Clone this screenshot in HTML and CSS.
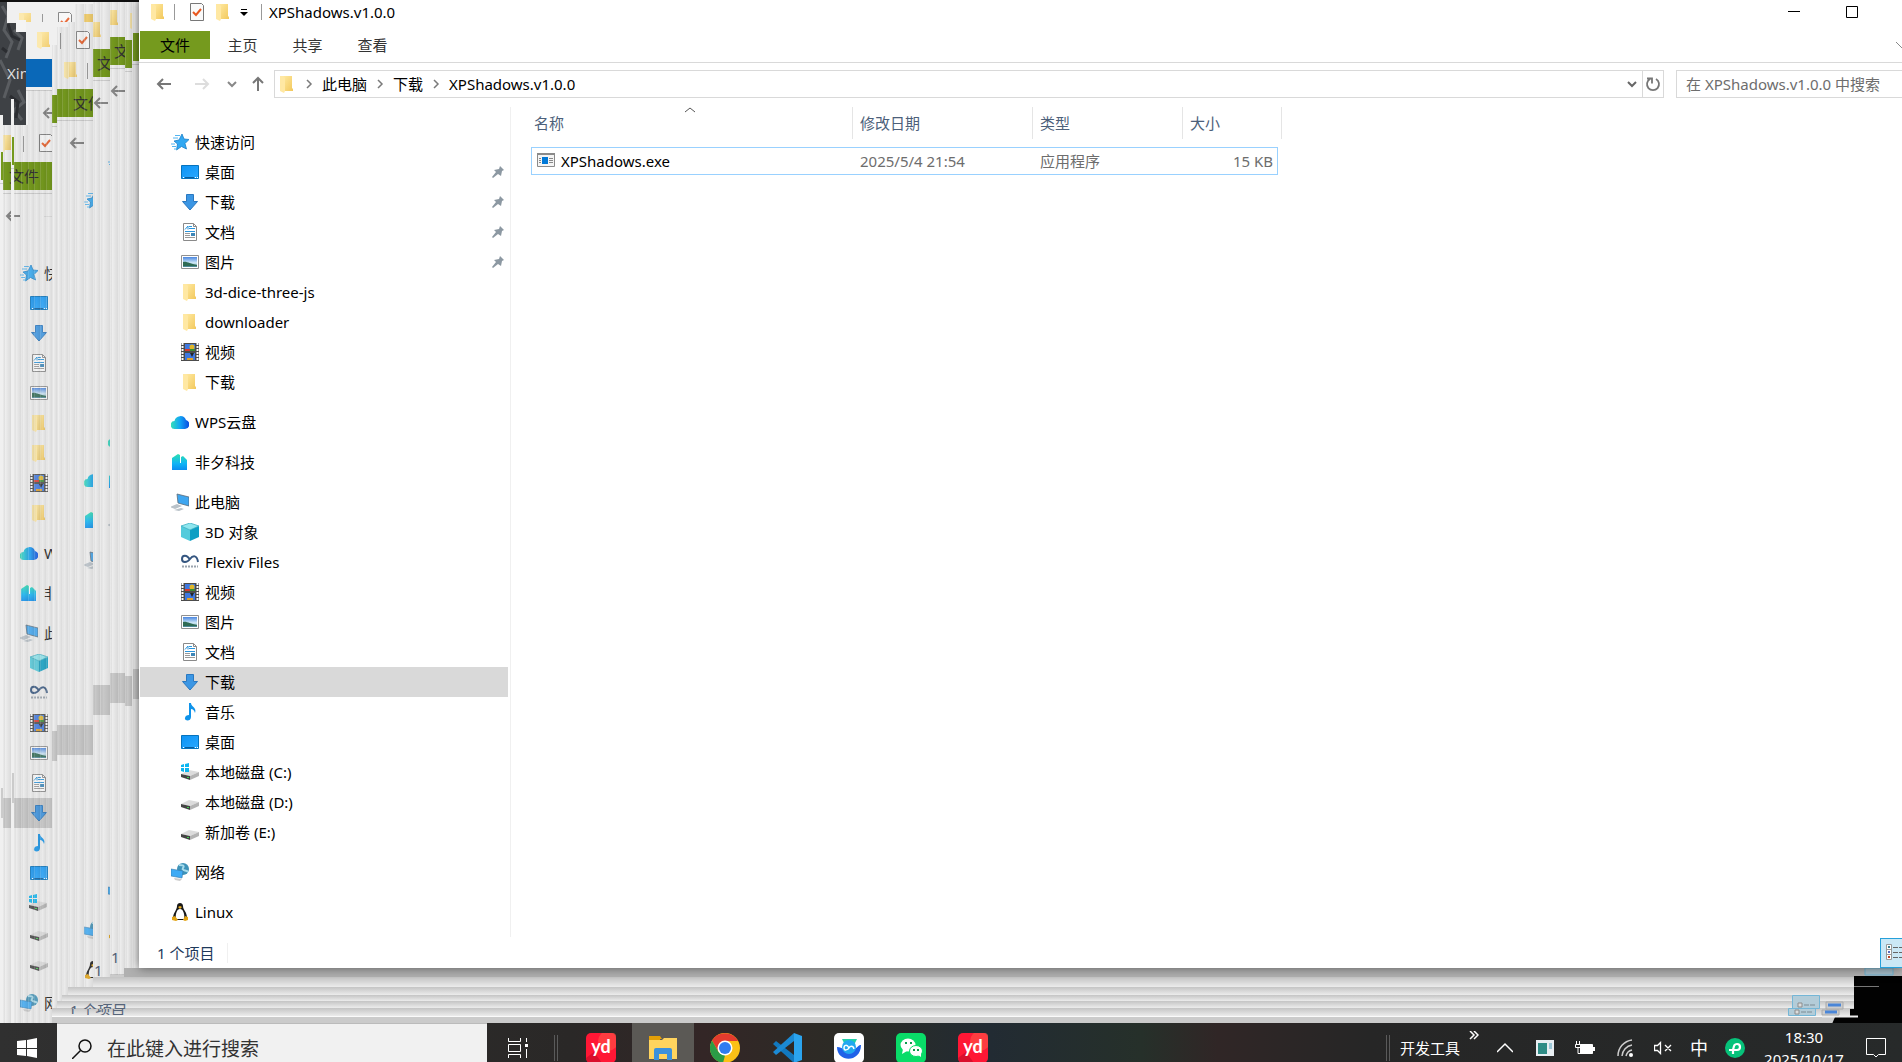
FILE: index.html
```
<!DOCTYPE html>
<html lang="zh-CN">
<head>
  <meta charset="UTF-8" />
  <meta name="viewport" content="width=device-width, initial-scale=1.0" />
  <title>XPShadows.v1.0.0</title>
  <link rel="stylesheet" href="styles.css">
</head>
<body>
  <!-- Icons -->
  <svg class="defs" aria-hidden="true">
    <defs>
      <linearGradient id="gFolder" x1="0" x2="1" y2="1"><stop offset="0" stop-color="#ffe9a0"/><stop offset="1" stop-color="#f2c85c"/></linearGradient>
      <linearGradient id="gCloud" x1="0" x2="1"><stop offset="0" stop-color="#35e0b8"/><stop offset=".5" stop-color="#12a5f5"/><stop offset="1" stop-color="#0a4be0"/></linearGradient>
      <linearGradient id="gBuild" x2="0" y2="1"><stop offset="0" stop-color="#2de0b0"/><stop offset=".6" stop-color="#0fb4f5"/><stop offset="1" stop-color="#0a8df0"/></linearGradient>
      <linearGradient id="gDesk" x2="1" y2="1"><stop offset="0" stop-color="#0c93f5"/><stop offset="1" stop-color="#2ba8ff"/></linearGradient>
      <linearGradient id="gSky" x2="0" y2="1"><stop offset="0" stop-color="#4a86e0"/><stop offset=".6" stop-color="#d4ecf8"/><stop offset="1" stop-color="#3b7c8c"/></linearGradient>
      <linearGradient id="gRow" x2="0" y2="1"><stop offset="0" stop-color="#c4c4c4"/><stop offset=".8" stop-color="#e4e4e4"/><stop offset="1" stop-color="#ececec"/></linearGradient>
      <linearGradient id="gCol" x2="1" y2="0"><stop offset="0" stop-color="#fff" stop-opacity=".25"/><stop offset=".3" stop-color="#000" stop-opacity=".01"/><stop offset="1" stop-color="#000" stop-opacity=".09"/></linearGradient>
    </defs>
    <symbol id="i-folder" viewBox="0 0 18 18"><path d="M5 1h9v12l1 1v2H5z" fill="url(#gFolder)"/><path d="M2 1h3l2 2v13l-1 2-4-2z" fill="#ffe8a3"/></symbol>
    <symbol id="i-star" viewBox="0 0 18 18"><path d="M11 1l2 5 5 .5-4 4 1.500 5.500-5-2.500L5.500 17 6.500 11 3 8l5-1z" fill="#31a8f2" stroke="#1b7fc8" stroke-width=".8"/><path d="M4 2.500h5M2 5h5M0 11h4M1 13.500h4M3 16h3" stroke="#53b5f0"/></symbol>
    <symbol id="i-desktop" viewBox="0 0 18 18"><path d="M.5 2.500h17v13H.5z" fill="url(#gDesk)" stroke="#0673bd"/><path d="M2 14.500h1m11 0h1m1 0h1" stroke="#fff"/><path d="M4 14.500h9" stroke="#0b5c9c"/></symbol>
    <symbol id="i-down" viewBox="0 0 18 18"><path d="M5.500 1.500h7v7h4L9 17 1.500 8.500h4z" fill="#3b96e4" stroke="#2a78c0"/></symbol>
    <symbol id="i-doc" viewBox="0 0 18 18"><path d="M2.500.5h10l3 3v14h-13z" fill="#fff" stroke="#8a8a8a"/><path d="M12.500.5v3h3" fill="none" stroke="#8a8a8a"/><path d="M4 6.500L7 3v3.500M8 3.500h3M8 5.500h6M4 8.500h10" fill="none" stroke="#2b95dc"/><path d="M4 10.500h5M4 12.500h5M4 14.500h10" stroke="#9a9a9a"/><path d="M10 10h4v3h-4z" fill="#3c86b8"/></symbol>
    <symbol id="i-pic" viewBox="0 0 18 18"><path d="M.5 2.500h17v13H.5z" fill="#fff" stroke="#909090"/><path d="M2 4h14v10H2z" fill="url(#gSky)"/><path d="M2 9c4-1 7 2 14 3v1H2z" fill="#2f6b54"/></symbol>
    <symbol id="i-video" viewBox="0 0 18 18"><path d="M0 0h18v18H0z" fill="#4b4b4b"/><path d="M1.500 0v18M16.500 0v18" stroke="#fff" stroke-width="2" stroke-dasharray="2 1"/><path d="M4 1h10v7H4zM4 10h10v7H4z" fill="#3e78e0"/><path d="M4 6h6v2H4z" fill="#d8382c"/><circle cx="11" cy="4" r="2.500" fill="#e0b72a"/><path d="M9 6h5v2H9z" fill="#3c8a34"/><path d="M9 10h4l-2 4z" fill="#222"/><path d="M6 15h6v2H6z" fill="#e0a028"/></symbol>
    <symbol id="i-cloud" viewBox="0 0 18 18"><path d="M4 16a4 4 0 0 1-.5-8 6 6 0 0 1 11.500-1A4.600 4.600 0 0 1 14 16z" fill="url(#gCloud)"/></symbol>
    <symbol id="i-build" viewBox="0 0 18 18"><path d="M1 5l6-4 2 1v8h1V4l2-1 4 4v10H1z" fill="url(#gBuild)"/><path d="M9.500 2v8" stroke="#fff"/></symbol>
    <symbol id="i-pc" viewBox="0 0 18 18"><path d="M6 1l12 3v9L7 10z" fill="#3fa6f0" stroke="#5a6b78" stroke-width=".8"/><path d="M-1 14l7-3 5 2-7 3zM3 17l7-2 3 1-5 2z" fill="#b9c2c9"/></symbol>
    <symbol id="i-cube" viewBox="0 0 18 18"><path d="M9 0l9 3-9 4-9-4z" fill="#8fe6ee"/><path d="M0 3l9 4v11l-9-4z" fill="#53cbdc"/><path d="M18 3L9 7v11l9-4z" fill="#0d9fc4"/><path d="M9 0l9 3-9 4-9-4z" fill="none" stroke="#2fa9bd" stroke-width=".7"/></symbol>
    <symbol id="i-flexiv" viewBox="0 0 18 18"><path d="M9 7C6 1 1 2 1 6s5 4 8 0 7-4 8 3" fill="none" stroke="#355680" stroke-width="2"/><path d="M1 13.500h16" stroke="#9aa3ae" stroke-width="2" stroke-dasharray="2 1"/></symbol>
    <symbol id="i-music" viewBox="0 0 18 18"><path d="M8 0h2c0 4 6 4 4 10-1-3-2-4-4-4v8c0 5-7 4-6 1 0-2 2-3 4-3z" fill="#0f93ea"/></symbol>
    <symbol id="i-disk" viewBox="0 0 18 18"><path d="M0 11l8-4 10 2-9 4z" fill="#dcdcdc"/><path d="M0 11l9 2v4l-9-3z" fill="#444"/><path d="M9 13l9-4v4l-9 4z" fill="#b4b4b4"/><path d="M6 14h2v1H6z" fill="#3fd04c"/></symbol>
    <symbol id="i-cdisk" viewBox="0 0 18 18"><use href="#i-disk"/><path d="M0 2l3-1v3H0zM4 1l4-1v4H4zM0 5h3v4L0 8zM4 5h4v4H4z" fill="#0bb5f0"/></symbol>
    <symbol id="i-net" viewBox="0 0 18 18"><circle cx="12" cy="6" r="6" fill="#3f93b8"/><path d="M8 2c3 0 6 0 4 3s4 2 5 4" fill="none" stroke="#a8dcec" stroke-width="2"/><path d="M0 6l12 2-1 7-11-2z" fill="#3fabf5" stroke="#347aac" stroke-width=".6"/><path d="M3 15l8 1-2 2-5-1z" fill="#ccc"/></symbol>
    <symbol id="i-linux" viewBox="0 0 18 18"><path d="M6 3c0-4 6-4 6 0 0 4 4 6 4 12l-4 2H5l-3-2C2 10 6 7 6 3z" fill="#181818"/><path d="M9 6c3 0 5 5 4 10H5C4 11 6 6 9 6z" fill="#fff"/><path d="M7 4l2-1 2 1-2 2z" fill="#eeb020"/><path d="M1 14l3-1 3 4-2 1-4-1zM17 14l-3-1-2 4 2 1 3-1z" fill="#e2a210"/></symbol>
    <symbol id="i-check" viewBox="0 0 18 18"><path d="M2.500.5h11l2 2v15h-13z" fill="#fafafa" stroke="#777"/><path d="M5 9l3 3 5-6" fill="none" stroke="#e8571e" stroke-width="2"/></symbol>
    <symbol id="i-pin" viewBox="0 0 12 12"><path d="M8 0l4 4-2 1-1 5-3-2-5 4-1-1 4-5-2-2 5-1z" fill="#8c98a2"/></symbol>
    <symbol id="i-left" viewBox="0 0 16 16"><path d="M15 8H2M7 3L2 8l5 5" fill="none" stroke="currentColor" stroke-width="2"/></symbol>
    <symbol id="i-chev" viewBox="0 0 10 10"><path d="M1 3l4 4 4-4" fill="none" stroke="currentColor" stroke-width="2"/></symbol>
    <symbol id="i-next" viewBox="0 0 10 10"><path d="M3 1l4 4-4 4" fill="none" stroke="#7a7a7a" stroke-width="1.500"/></symbol>
    <symbol id="i-yd" viewBox="0 0 30 30"><rect width="30" height="30" rx="5" fill="#ff1735"/><circle cx="22" cy="8" r="10" fill="#ff5547" opacity=".6"/><path d="M0 25l8-6 8 11H5a5 5 0 0 1-5-5z" fill="#d90f2c"/><text x="15" y="20" text-anchor="middle" class="yd">yd</text></symbol>
    <!-- face of a window left behind by dragging -->
    <g id="ghost">
      <path d="M139-20h600v988H139z" fill="#f0f0f0"/>
      <path d="M140 31h70v28h-70z" fill="currentColor"/>
      <path d="M139 62.500h400" stroke="#cfcfcf"/>
      <path d="M140 667h368v30H140z" fill="#cbcbcb"/>
      <path d="M174.500 5v16" stroke="#999"/>
      <g opacity=".85">
        <use href="#i-folder" x="149" y="3" width="18" height="18"/>
        <use href="#i-check" x="188" y="3" width="18" height="18"/>
        <use href="#i-left" x="156" y="77" width="16" height="16" color="#777"/>
        <path d="M195 85.500h14" stroke="#ddd"/>
        <use href="#i-star" x="171" y="133" width="18" height="18"/>
        <use href="#i-desktop" x="181" y="163" width="18" height="18"/>
        <use href="#i-down" x="181" y="193" width="18" height="18"/>
        <use href="#i-doc" x="181" y="223" width="18" height="18"/>
        <use href="#i-pic" x="181" y="253" width="18" height="18"/>
        <use href="#i-folder" x="181" y="283" width="18" height="18"/>
        <use href="#i-folder" x="181" y="313" width="18" height="18"/>
        <use href="#i-video" x="181" y="343" width="18" height="18"/>
        <use href="#i-folder" x="181" y="373" width="18" height="18"/>
        <use href="#i-cloud" x="171" y="413" width="18" height="18"/>
        <use href="#i-build" x="171" y="453" width="18" height="18"/>
        <use href="#i-pc" x="171" y="493" width="18" height="18"/>
        <use href="#i-cube" x="181" y="523" width="18" height="18"/>
        <use href="#i-flexiv" x="181" y="553" width="18" height="18"/>
        <use href="#i-video" x="181" y="583" width="18" height="18"/>
        <use href="#i-pic" x="181" y="613" width="18" height="18"/>
        <use href="#i-doc" x="181" y="643" width="18" height="18"/>
        <use href="#i-down" x="181" y="673" width="18" height="18"/>
        <use href="#i-music" x="181" y="703" width="18" height="18"/>
        <use href="#i-desktop" x="181" y="733" width="18" height="18"/>
        <use href="#i-cdisk" x="180" y="763" width="18" height="18"/>
        <use href="#i-disk" x="181" y="793" width="18" height="18"/>
        <use href="#i-disk" x="181" y="823" width="18" height="18"/>
        <use href="#i-net" x="171" y="863" width="18" height="18"/>
        <use href="#i-linux" x="171" y="903" width="18" height="18"/>
      </g>
    </g>
  </svg>

  <div class="desktop">
    <svg class="trails" aria-hidden="true">
      <rect width="100%" height="100%" fill="#cbcbcb"/>
      <!-- wallpaper corner -->
      <path d="M0 0h26v126H0z" fill="#3e4145"/>
      <path d="M2 6l6 10-4 14 8 12-6 16M14 30l8 8-4 12M18 90l6 12-10 8 8 10M0 60l10 20-6 18" fill="none" stroke="#5a5d61" stroke-width="3"/>
      <path d="M8 24l4 12 8 4M2 48l5 4M10 96l8 6-2 16" fill="none" stroke="#2b2d31" stroke-width="3"/>
      <text x="7" y="79" class="wall-text">Xin</text>

      <g color="#759a1e">
        <svg x="7" y="2" width="86" height="21"><use href="#ghost" x="-139" y="7"/></svg>
        <path d="M84 14h9v8h-9z" fill="#f2cf70"/>
        <path d="M16 20h10v12H16z" fill="#f4f4f4"/>
        <svg x="26" y="22" width="67" height="103" color="#0a68b8"><use href="#ghost" x="-140" y="6"/></svg>
        <svg x="0" y="115" width="3" height="910"><use href="#ghost" x="-139" y="6"/></svg>
        <svg x="3" y="125" width="49" height="900">
          <use href="#ghost" x="-154" y="6"/>
          <text x="6" y="57" class="ghost-text">文件</text>
          <text x="41" y="154" class="ghost-text">快</text>
          <text x="41" y="434" class="ghost-text">W</text>
          <text x="41" y="474" class="ghost-text">非</text>
          <text x="41" y="514" class="ghost-text">此</text>
          <text x="41" y="884" class="ghost-text">网</text>
        </svg>
        <svg x="11" y="99" width="3" height="924"><use href="#ghost" x="-139" y="7"/></svg>
        <svg x="52" y="45" width="5" height="971"><use href="#ghost" x="-140" y="19"/></svg>
        <svg x="57" y="53" width="36" height="955"><use href="#ghost" x="-144" y="5"/><text x="16" y="56" class="ghost-text">文件</text></svg>
        <svg x="93" y="2" width="17" height="978"><use href="#ghost" x="-156" y="16"/><text x="4" y="67" class="ghost-text">文</text><text x="1" y="974" class="ghost-text status-text">1</text></svg>
        <svg x="110" y="2" width="15" height="973"><use href="#ghost" x="-156" y="4"/><text x="4" y="55" class="ghost-text">文</text><text x="1" y="961" class="ghost-text status-text">1</text></svg>
        <svg x="125" y="2" width="7" height="973"><use href="#ghost" x="-146" y="7"/></svg>
        <svg x="132" y="0" width="7" height="970"><use href="#ghost" x="-139" y="2"/></svg>
      </g>
      <path d="M0 0h139v2H0z" fill="#111"/>

      <!-- left edges -->
      <g fill="url(#gCol)">
        <path d="M3 125h8v898H3z"/><path d="M14 125h7v898h-7z"/><path d="M21 125h7v898h-7z"/><path d="M28 90h6v933h-6z"/>
        <path d="M34 90h6v933h-6z"/><path d="M40 90h6v933h-6z"/><path d="M46 90h6v933h-6z"/><path d="M52 45h5v971h-5z"/>
        <path d="M57 27h5v981h-5z"/><path d="M62 27h6v974h-6z"/><path d="M68 22h7v973h-7z"/><path d="M75 4h9v983h-9z"/>
        <path d="M84 4h9v983h-9z"/><path d="M93 2h7v978h-7z"/><path d="M100 2h10v978h-10z"/><path d="M110 2h8v973h-8z"/>
        <path d="M118 2h7v973h-7z"/><path d="M125 2h7v973h-7z"/><path d="M132 2h7v973h-7z"/>
      </g>
      <!-- bottom edges -->
      <g fill="url(#gRow)">
        <rect x="52" y="1008" width="100%" height="8"/>
        <rect x="57" y="1001" width="100%" height="7"/>
        <rect x="62" y="995" width="100%" height="6"/>
        <rect x="68" y="987" width="100%" height="8"/>
        <rect x="93" y="977" width="100%" height="10"/>
      </g>
      <rect x="124" y="968" width="100%" height="9" fill="#b0b0b0"/>
      <rect x="52" y="1016" width="100%" height="1" fill="#fafafa"/>
      <svg x="60" y="1002" width="80" height="7"><text x="10" y="14" class="ghost-text status-text">1 个项目</text></svg>
      <svg x="60" y="1009" width="80" height="6"><text x="8" y="5" class="ghost-text status-text">1 个项目</text></svg>

      <!-- bottom right corner -->
      <svg x="100%" overflow="visible">
        <path d="M-48 976H0v48h-70l3-7h15v-8h4z" fill="#020202"/>
        <path d="M-48 986.500h25" stroke="#777"/>
        <path d="M-80 1016.500h36" stroke="#eee" stroke-width="2"/>
        <path d="M-37 968h28v7h-28z" fill="#a3bcc8" stroke="#6fb2d0"/>
        <path d="M-109.500 995.500h27v13h-27zM-113.500 1008.500h27v7h-27z" fill="#b3ccd8" stroke="#74b6d6"/>
        <path d="M-104 1003h4v4h-4zM-107 1010h4v4h-4z" fill="#ddd" stroke="#8c8c8c"/>
        <path d="M-98 1005h12M-101 1012h12" stroke="#7c8c94" stroke-dasharray="5 1"/>
        <path d="M-76 1002h17v7h-17zM-80 1010h17v5h-17z" fill="#ccc" stroke="#aaa"/>
        <path d="M-74 1005h13M-77 1012h12" stroke="#4a86d8" stroke-width="3"/>
      </svg>
    </svg>

    <!-- Explorer window -->
    <main class="window">
      <header class="titlebar">
        <svg class="icon"><use href="#i-folder"/></svg>
        <span class="bar"></span>
        <button class="quick" aria-label="属性"><svg class="icon"><use href="#i-check"/></svg></button>
        <button class="quick" aria-label="新建文件夹"><svg class="icon"><use href="#i-folder"/></svg></button>
        <button class="quick more" aria-label="自定义快速访问工具栏"><svg width="8" height="8" viewBox="0 0 8 8"><path d="M1 1h6v1H1zM0 4h8L4 8z"/></svg></button>
        <span class="bar"></span>
        <h1>XPShadows.v1.0.0</h1>
        <div class="window-buttons">
          <button aria-label="最小化"><svg width="12" height="12"><path d="M0 5h12v1H0z"/></svg></button>
          <button aria-label="最大化"><svg width="12" height="12"><path d="M.5.5h11v11H.5z" fill="none" stroke="#000"/></svg></button>
        </div>
      </header>

      <nav class="tabs">
        <button class="file">文件</button>
        <button>主页</button>
        <button>共享</button>
        <button>查看</button>
        <button class="expand" aria-label="展开功能区"><svg width="12" height="8"><path d="M0 1l6 6 6-6" fill="none" stroke="#888"/></svg></button>
      </nav>

      <div class="address-row">
        <button class="arrow" aria-label="后退"><svg><use href="#i-left"/></svg></button>
        <button class="arrow off" aria-label="前进"><svg class="flip"><use href="#i-left"/></svg></button>
        <button class="recent" aria-label="最近浏览的位置"><svg><use href="#i-chev"/></svg></button>
        <button class="arrow up" aria-label="上移"><svg class="turn"><use href="#i-left"/></svg></button>
        <div class="address">
          <svg class="icon"><use href="#i-folder"/></svg>
          <svg class="next"><use href="#i-next"/></svg>
          <a href="#">此电脑</a>
          <svg class="next"><use href="#i-next"/></svg>
          <a href="#">下载</a>
          <svg class="next"><use href="#i-next"/></svg>
          <a href="#">XPShadows.v1.0.0</a>
          <button class="drop" aria-label="以前的位置"><svg><use href="#i-chev"/></svg></button>
          <button class="refresh" aria-label="刷新"><svg width="16" height="16" viewBox="0 0 16 16"><path d="M11 3a6 6 0 1 1-6 0M2 2.500h5v5" fill="none" stroke="#777" stroke-width="1.800"/></svg></button>
        </div>
        <input class="search" type="text" placeholder="在 XPShadows.v1.0.0 中搜索" aria-label="搜索">
      </div>

      <div class="content">
        <aside class="sidebar">
          <ul>
            <li class="top"><svg class="icon"><use href="#i-star"/></svg>快速访问</li>
            <li><svg class="icon"><use href="#i-desktop"/></svg>桌面<svg class="pin"><use href="#i-pin"/></svg></li>
            <li><svg class="icon"><use href="#i-down"/></svg>下载<svg class="pin"><use href="#i-pin"/></svg></li>
            <li><svg class="icon"><use href="#i-doc"/></svg>文档<svg class="pin"><use href="#i-pin"/></svg></li>
            <li><svg class="icon"><use href="#i-pic"/></svg>图片<svg class="pin"><use href="#i-pin"/></svg></li>
            <li><svg class="icon"><use href="#i-folder"/></svg>3d-dice-three-js</li>
            <li><svg class="icon"><use href="#i-folder"/></svg>downloader</li>
            <li><svg class="icon"><use href="#i-video"/></svg>视频</li>
            <li><svg class="icon"><use href="#i-folder"/></svg>下载</li>
          </ul>
          <ul><li class="top"><svg class="icon"><use href="#i-cloud"/></svg>WPS云盘</li></ul>
          <ul><li class="top"><svg class="icon"><use href="#i-build"/></svg>非夕科技</li></ul>
          <ul>
            <li class="top"><svg class="icon"><use href="#i-pc"/></svg>此电脑</li>
            <li><svg class="icon"><use href="#i-cube"/></svg>3D 对象</li>
            <li><svg class="icon"><use href="#i-flexiv"/></svg>Flexiv Files</li>
            <li><svg class="icon"><use href="#i-video"/></svg>视频</li>
            <li><svg class="icon"><use href="#i-pic"/></svg>图片</li>
            <li><svg class="icon"><use href="#i-doc"/></svg>文档</li>
            <li class="selected"><svg class="icon"><use href="#i-down"/></svg>下载</li>
            <li><svg class="icon"><use href="#i-music"/></svg>音乐</li>
            <li><svg class="icon"><use href="#i-desktop"/></svg>桌面</li>
            <li><svg class="icon"><use href="#i-cdisk"/></svg>本地磁盘 (C:)</li>
            <li><svg class="icon"><use href="#i-disk"/></svg>本地磁盘 (D:)</li>
            <li><svg class="icon"><use href="#i-disk"/></svg>新加卷 (E:)</li>
          </ul>
          <ul><li class="top"><svg class="icon"><use href="#i-net"/></svg>网络</li></ul>
          <ul><li class="top"><svg class="icon"><use href="#i-linux"/></svg>Linux</li></ul>
        </aside>

        <section class="files">
          <table>
            <thead>
              <tr>
                <th class="name">名称<svg class="sort" width="10" height="6"><path d="M0 5l5-4 5 4" fill="none" stroke="#555"/></svg></th>
                <th class="date">修改日期</th>
                <th class="type">类型</th>
                <th class="size">大小</th>
              </tr>
            </thead>
            <tbody>
              <tr>
                <td class="name"><svg class="icon" viewBox="0 0 18 18"><path d="M.5 1.500h17v13H.5z" fill="#f4f4f4" stroke="#8a8a8a"/><path d="M0 1h18v2H0z" fill="#8a8a8a"/><path d="M5 5h6v7H5z" fill="#0078d7"/><path d="M2 6.500h2M2 8.500h2M2 10.500h2M12 6.500h4M12 8.500h4M12 10.500h4" stroke="#888"/></svg>XPShadows.exe</td>
                <td>2025/5/4 21:54</td>
                <td>应用程序</td>
                <td class="size">15 KB</td>
              </tr>
            </tbody>
          </table>
        </section>
      </div>

      <footer class="status">
        <span>1 个项目</span>
        <button class="details" aria-label="详细信息"><svg width="26" height="18"><path d="M.5.500h5v15h-5zM.5 5.500h5m-5 5h5" fill="#fff" stroke="#999"/><path d="M2 2h2v2H2z" fill="#3a7a8a"/><path d="M2 7h2v2H2z" fill="#5a6ac0"/><path d="M2 12h2v2H2z" fill="#c04020"/><path d="M7 3.500h5m1 0h5M7 8.500h5m1 0h5M7 13.500h5m1 0h5" stroke="#666"/></svg></button>
      </footer>
    </main>
  </div>

  <!-- Taskbar -->
  <footer class="taskbar">
    <button class="start" aria-label="开始"><svg width="20" height="20" viewBox="0 0 20 20"><path d="M0 3l9-1v8H0zM10 2l10-2v10H10zM0 11h9v7l-9-1zM10 11h10v9l-10-2z" fill="#fff"/></svg></button>
    <label class="task-search">
      <svg width="20" height="20" viewBox="0 0 20 20"><circle cx="13" cy="7" r="6" fill="none" stroke="#111" stroke-width="1.500"/><path d="M8.500 11.500L0 20" stroke="#111" stroke-width="1.500"/></svg>
      <input type="text" placeholder="在此键入进行搜索" aria-label="搜索">
    </label>
    <button class="view" aria-label="任务视图"><svg width="20" height="20" viewBox="0 0 20 20"><path d="M.5 0v3.500h12V0M.5 20v-3.500h12V20M.5 6.500h12v7H.5zM18.500 0v4M18.500 11v9" fill="none" stroke="#fff"/><path d="M17 6h3v3h-3z" fill="#fff"/></svg></button>
    <span class="grip"></span>
    <button class="app" aria-label="有道"><svg><use href="#i-yd"/></svg></button>
    <button class="app active" aria-label="文件资源管理器"><svg viewBox="0 0 30 30"><path d="M1 3h11l2 3h-2v5H1z" fill="#e3a008"/><path d="M1 7h13l2-2h13v21H1z" fill="#ffd45e"/><path d="M6 27V17a2 2 0 0 1 2-2h14a2 2 0 0 1 2 2v10h-5v-6h-8v6z" fill="#3c91dc"/></svg></button>
    <button class="app" aria-label="Chrome"><svg viewBox="0 0 30 30"><circle cx="15" cy="15" r="15" fill="#fbc116"/><path d="M15 8h13a15 15 0 0 0-26-.5L8.500 19 9 13z" fill="#e33b2e"/><path d="M2 7.500L8.500 19l6.500 3.500L13 30A15 15 0 0 1 2 7.500z" fill="#2b9c46"/><circle cx="15" cy="15" r="7.500" fill="#fff"/><circle cx="15" cy="15" r="6" fill="#2f7cf0"/></svg></button>
    <button class="app" aria-label="Visual Studio Code"><svg viewBox="0 0 30 30"><path d="M1 11l3-3 18 14v8z" fill="#1279bf"/><path d="M22 0v8L4 22l-3-3z" fill="#1b8ad4"/><path d="M22 0l8 3v24l-8 3z" fill="#2ba4ee"/></svg></button>
    <button class="app" aria-label="Flexiv"><svg viewBox="0 0 30 30"><rect width="30" height="30" rx="5" fill="#fff"/><path d="M8 6h15l-3 6-8 2z" fill="#22cfa8"/><path d="M3 14c7 0 5 4 12 4s9-7 12-6c0 18-24 18-24 2z" fill="#1f62e8"/><circle cx="15" cy="14" r="7" fill="#22a8f0"/><path d="M15 15c-2-4-5-3-5 0s4 2 5 0 4-3 5 1" fill="none" stroke="#fff" stroke-width="1.500"/></svg></button>
    <button class="app" aria-label="微信"><svg viewBox="0 0 30 30"><rect width="30" height="30" rx="5" fill="#09dc68"/><ellipse cx="12" cy="12" rx="7.500" ry="6.500" fill="#fff"/><path d="M7 16l-1 5 5-3z" fill="#fff"/><ellipse cx="20" cy="18" rx="6.500" ry="5.500" fill="#fff" stroke="#09dc68"/><path d="M22 22l3 2v-4z" fill="#fff"/><path d="M9 9h2v2H9zM14 9h2v2h-2zM17 16h2v2h-2zM21 16h2v2h-2z" fill="#0a9c4c"/></svg></button>
    <button class="app" aria-label="有道词典"><svg><use href="#i-yd"/></svg></button>

    <div class="tray">
      <span class="grip"></span>
      <span class="tools">开发工具</span>
      <button class="chevrons" aria-label="更多"><svg width="10" height="9"><path d="M1 0l4 4-4 4M5 0l4 4-4 4" fill="none" stroke="#fff" stroke-width="1.500"/></svg></button>
      <button class="wide" aria-label="显示隐藏的图标"><svg width="16" height="18"><path d="M0 13l8-8 8 8" fill="none" stroke="#fff" stroke-width="1.500"/></svg></button>
      <button class="wide" aria-label="桌面工具"><svg width="18" height="16"><path d="M0 0h18v16H0z" fill="#e8eef2"/><path d="M2 3h9v11H2z" fill="#2f8c86"/><path d="M13 3h3v6h-3z" fill="#9cc8d8"/></svg></button>
      <button class="wide" aria-label="电池"><svg width="20" height="14"><path d="M5.500 3.500h12v9h-12z" fill="#fff" stroke="#fff"/><path d="M18 6h2v4h-2z" fill="#fff"/><path d="M1.500 0v3m3-3v3M.5 3.500h5v3h-5zM3 7v5.500h3" fill="none" stroke="#fff"/></svg></button>
      <button class="wide" aria-label="网络"><svg width="16" height="18"><path d="M1 17A16 16 0 0 1 15 1M5 17A12 12 0 0 1 15 6M9 17a8 8 0 0 1 6-6" fill="none" stroke="#ccc" stroke-width="1.500"/><circle cx="14" cy="16" r="2" fill="#fff"/></svg></button>
      <button aria-label="音量"><svg width="18" height="14"><path d="M.5 4.500h3l3-3v11l-3-3h-3zM11 4l6 6m0-6l-6 6" fill="none" stroke="#fff" stroke-width="1.300"/></svg></button>
      <button class="ime">中</button>
      <button aria-label="输入法"><svg width="20" height="20" viewBox="0 0 20 20"><circle cx="10" cy="10" r="10" fill="#07c27a"/><path d="M8 16v-4h4a3 3 0 0 0 0-6c-3 0-3 2-4 6M4 12h4" fill="none" stroke="#fff" stroke-width="2.200"/></svg></button>
      <button class="clock"><time>18:30</time><time>2025/10/17</time></button>
      <button class="notice" aria-label="通知"><svg width="20" height="20"><path d="M.5.500h19v16h-7L10 19l-2.500-2.500h-7z" fill="none" stroke="#fff"/></svg></button>
    </div>
  </footer>
</body>
</html>
```

FILE: styles.css
```
* {
  box-sizing: border-box;
}

html {
  height: 100%;
  overflow: hidden;
}

body {
  display: flex;
  flex-direction: column;
  min-height: 100vh;
  margin: 0;
  overflow: hidden;
  background: #202020;
  font-family: "Noto Sans", "Noto Sans CJK SC", sans-serif;
  font-size: 15px;
  line-height: 20px;
  color: #000;
}

button {
  display: flex;
  align-items: center;
  justify-content: center;
  padding: 0;
  border: none;
  background: none;
  font: inherit;
  color: inherit;
}

input {
  font: inherit;
  outline: none;
}

svg {
  flex: none;
}

.defs {
  position: absolute;
  width: 0;
  height: 0;
}

.icon {
  width: 18px;
  height: 18px;
}

/* Desktop */
.desktop {
  position: relative;
  flex: none;
  padding: 0 0 55px 139px;
}

.trails {
  position: absolute;
  top: 0;
  left: 0;
  width: 100%;
  height: 100%;
}

.ghost-text {
  font-size: 15px;
  fill: #333;
}

.status-text {
  fill: #56657a;
}

.wall-text {
  font-size: 15px;
  fill: #ddd;
}

/* Window */
.window {
  position: relative;
  background: #fff;
  box-shadow: 0 0 10px rgba(0, 0, 0, 0.5);
}

.titlebar {
  display: flex;
  align-items: center;
  height: 24px;
  margin-bottom: 7px;
  padding: 0 21px 0 10px;
}

.titlebar h1 {
  margin: 0 0 0 7px;
  font-size: 15px;
  font-weight: normal;
}

.bar {
  width: 1px;
  height: 16px;
  margin-left: 7px;
  background: #999;
}

.quick {
  margin-left: 8px;
}

.bar + .quick {
  margin-left: 13px;
}

.more {
  width: 14px;
  height: 18px;
  margin-left: 5px;
  margin-right: 3px;
}

.window-buttons {
  display: flex;
  margin-left: auto;
}

.window-buttons button {
  width: 58px;
  height: 24px;
}

.tabs {
  display: flex;
  height: 32px;
  padding-left: 1px;
  border-bottom: 1px solid #d9d9d9;
  overflow: hidden;
}

.tabs button {
  width: 65px;
  height: 28px;
  color: #333;
}

.tabs .file {
  width: 70px;
  background: #759a1e;
  color: #000;
}

.tabs .expand {
  justify-content: flex-start;
  width: 6px;
  margin-left: auto;
  overflow: hidden;
}

.address-row {
  display: flex;
  align-items: center;
  height: 42px;
  margin-bottom: 2px;
  padding-left: 17px;
}

.arrow {
  margin-right: 22px;
  color: #777;
}

.arrow svg {
  width: 16px;
  height: 16px;
}

.off {
  margin-right: 17px;
  color: #ddd;
}

.recent {
  margin-right: 13px;
  color: #888;
}

.up {
  margin-right: 8px;
}

.recent svg,
.drop svg,
.next {
  width: 10px;
  height: 10px;
}

.flip {
  transform: rotate(180deg);
}

.turn {
  transform: rotate(90deg);
}

.address {
  display: flex;
  flex: 1;
  align-items: center;
  height: 28px;
  padding-left: 3px;
  border: 1px solid #d9d9d9;
}

.address a {
  color: #000;
  text-decoration: none;
}

.next {
  margin: 0 8px;
}

.drop {
  width: 20px;
  height: 26px;
  margin-left: auto;
  color: #666;
}

.refresh {
  width: 21px;
  height: 26px;
  border-left: 1px solid #d9d9d9;
}

.search {
  width: 226px;
  height: 28px;
  margin-left: 12px;
  padding: 0 0 0 9px;
  border: 1px solid #d9d9d9;
  border-right: none;
}

.search::placeholder {
  color: #6d6d6d;
  opacity: 1;
}

/* Sidebar */
.content {
  display: flex;
}

.sidebar {
  width: 372px;
  padding-top: 20px;
  border-right: 1px solid #f0f0f0;
}

.sidebar ul {
  margin: 0 2px 10px 1px;
  padding: 0;
  list-style: none;
}

.sidebar li {
  display: flex;
  align-items: center;
  gap: 6px;
  height: 30px;
  padding-left: 41px;
}

.sidebar .top {
  padding-left: 31px;
}

.sidebar .selected {
  background: #d9d9d9;
}

.pin {
  width: 12px;
  height: 12px;
  margin: 0 4px 0 auto;
}

/* File list */
.files {
  flex: 1;
  padding-left: 20px;
}

table {
  width: 751px;
  table-layout: fixed;
  border-spacing: 0;
}

th {
  position: relative;
  height: 32px;
  padding: 0 0 0 7px;
  border-right: 1px solid #e5e5e5;
  font-weight: normal;
  text-align: left;
  color: #4c607a;
}

th.name {
  width: 322px;
  padding-left: 3px;
}

th.date {
  width: 180px;
}

th.type {
  width: 150px;
}

.sort {
  position: absolute;
  top: 0;
  left: 50%;
  margin-left: -7px;
}

tbody::before {
  content: "";
  display: block;
  height: 8px;
}

tbody tr {
  position: relative;
}

td {
  height: 28px;
  padding: 0 0 0 7px;
  color: #6d6d6d;
}

td.name {
  display: flex;
  align-items: center;
  gap: 6px;
  padding-left: 6px;
  color: #000;
}

/* row outline, a little shorter than the header */
td.name::before {
  content: "";
  position: absolute;
  inset: 0 4px 0 0;
  border: 1px solid #99d1ff;
}

td.size {
  padding-right: 9px;
  text-align: right;
}

.status {
  display: flex;
  align-items: center;
  height: 31px;
  padding-left: 18px;
  color: #1e395b;
}

.status span {
  padding-right: 13px;
  border-right: 1px solid #f0f0f0;
}

.details {
  justify-content: flex-start;
  width: 22px;
  height: 30px;
  margin-left: auto;
  padding-left: 5px;
  overflow: hidden;
  border: 1px solid #26a0da;
  border-right: none;
  background: #cbe8f6;
}

/* Taskbar */
.taskbar {
  display: flex;
  flex: none;
  height: 50px;
  background: linear-gradient(90deg, #303030, #2a2827 30%, #332626 37%, #2b2c26 45%, #222b33 52%, #26302a 60%, #302626 64%, #262626 72%, #272a2a);
  color: #fff;
}

.start {
  width: 57px;
  padding-right: 3px;
}

.task-search {
  display: flex;
  align-items: center;
  gap: 15px;
  width: 430px;
  padding-left: 15px;
  border-top: 1px solid #bbb;
  background: #f1f1f1;
}

.task-search input {
  flex: 1;
  padding: 0;
  border: none;
  background: none;
  font-size: 19px;
}

.task-search input::placeholder {
  color: #333;
  opacity: 1;
}

.view {
  width: 61px;
}

.grip {
  width: 4px;
  height: 26px;
  margin: 12px 12px 0 6px;
  border: 1px solid #5a5a5a;
  border-width: 0 1px;
}

.app {
  width: 62px;
}

.app svg {
  width: 30px;
  height: 30px;
}

.active {
  background: #5b5955;
}

.yd {
  font-family: Lato, sans-serif;
  font-size: 18px;
  font-weight: bold;
  fill: #fff;
}

.tray {
  display: flex;
  align-items: center;
  margin-left: auto;
  padding-right: 16px;
}

.tray .grip {
  margin: 0 10px 0 0;
}

.tray button {
  width: 36px;
}

.tray .wide {
  width: 40px;
}

.tray .chevrons {
  width: 10px;
  margin: 0 6px 26px 9px;
}

.tray .ime {
  font-size: 18px;
}

.tray .clock {
  flex-direction: column;
  width: 84px;
  margin: 0 20px 0 9px;
  gap: 2px;
}

.tray .notice {
  width: 20px;
}
```
